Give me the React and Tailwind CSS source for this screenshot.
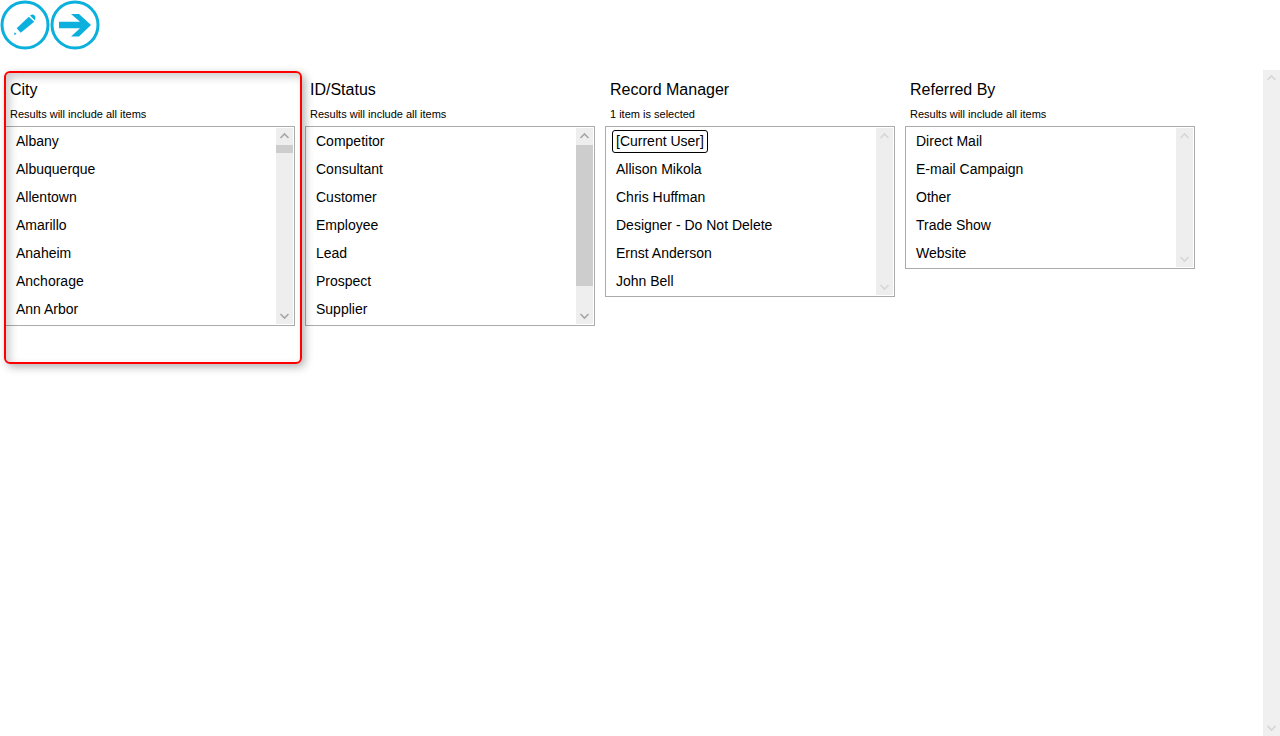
const lists = [
    {
        title: 'City',
        note: 'Results will include all items',
        items: ['Albany', 'Albuquerque', 'Allentown', 'Amarillo', 'Anaheim', 'Anchorage', 'Ann Arbor'],
        height: 'h-[200px]',
        thumb: 'h-[8px]',
        active: true,
    },
    {
        title: 'ID/Status',
        note: 'Results will include all items',
        items: ['Competitor', 'Consultant', 'Customer', 'Employee', 'Lead', 'Prospect', 'Supplier'],
        height: 'h-[200px]',
        thumb: 'h-[141px]',
        active: true,
    },
    {
        title: 'Record Manager',
        note: '1 item is selected',
        items: ['[Current User]', 'Allison Mikola', 'Chris Huffman', 'Designer - Do Not Delete', 'Ernst Anderson', 'John Bell'],
        height: 'h-[171px]',
        focused: true,
    },
    {
        title: 'Referred By',
        note: 'Results will include all items',
        items: ['Direct Mail', 'E-mail Campaign', 'Other', 'Trade Show', 'Website'],
        height: 'h-[143px]',
    },
];

function Chevron({ up, active }) {
    return (
        <svg width="17" height="17" viewBox="0 0 17 17" fill="none" className="shrink-0">
            <path
                d={up ? 'M4.5 10 L8.5 6 L12.5 10' : 'M4.5 7 L8.5 11 L12.5 7'}
                stroke={active ? '#a6a6a6' : '#d6d6d6'}
                strokeWidth="1.6"
            />
        </svg>
    );
}

function Scrollbar({ active, thumb }) {
    return (
        <div className="flex flex-col justify-between w-[17px] my-px mr-px bg-[#eeeeee]">
            <div className="flex flex-col">
                <Chevron up active={active} />
                {thumb && <div className={`${thumb} bg-[#cdcdcd]`}></div>}
            </div>
            <Chevron active={active} />
        </div>
    );
}

function Picker({ list }) {
    return (
        <div className="w-[290px] shrink-0">
            <div className="h-[28px] pt-[10px] pl-[5px] text-[16px] leading-[20px] text-black">{list.title}</div>
            <div className="h-[28px] pt-[8px] pl-[5px] text-[11px] leading-[16px] text-black">{list.note}</div>
            <div className={`flex ${list.height} border border-[#ababab] bg-white`}>
                <div className="flex-1 min-w-0">
                    {list.items.map((item, i) => (
                        <div key={item} className="flex items-center h-[28px] text-[14px] text-black">
                            {list.focused && i == 0 ?
                                <span className="ml-[6px] px-[3px] h-[23px] leading-[21px] border border-black rounded-[3px]">{item}</span> :
                                <span className="ml-[10px]">{item}</span>}
                        </div>
                    ))}
                </div>
                <Scrollbar active={list.active} thumb={list.thumb} />
            </div>
        </div>
    );
}

export default function App() {
    return (
        <div className="h-[736px] overflow-hidden bg-white font-['Liberation_Sans',Arial,sans-serif]">
            <div className="flex h-[70px]">
                <svg width="50" height="50" viewBox="0 0 50 50" fill="none">
                    <circle cx="25" cy="25" r="23" stroke="#0bb0dd" strokeWidth="3" />
                    <path d="M16.7 28.3 L28.8 16.8 L34.2 21.8 L20.7 32.7 Z" fill="#0bb0dd" />
                    <path d="M30 15.6 L32 14.6 Q33.2 14.2 34.2 15.2 L35 16 Q35.8 17 35.2 18.2 L35 20.4 Z" fill="#0bb0dd" />
                    <path d="M14.8 32.2 L16.6 33.9 L13.8 35 Z" fill="#0bb0dd" />
                </svg>
                <svg width="50" height="50" viewBox="0 0 50 50" fill="none">
                    <circle cx="25" cy="25" r="23" stroke="#0bb0dd" strokeWidth="3" />
                    <path d="M9 21.7 H30 L21 14 H29 L41 25 L29 36.5 H21 L30 28.3 H9 Z" fill="#0bb0dd" />
                </svg>
            </div>
            <div className="flex h-[666px]">
                <div className="flex-1 min-w-0 flex gap-[10px] pl-[5px] items-start relative">
                    {lists.map(list => <Picker key={list.title} list={list} />)}
                    <div className="absolute left-[4px] top-[1px] w-[298px] h-[293px] border-2 border-[#fe0000] rounded-[6px] pointer-events-none shadow-[3px_3px_8px_rgba(0,0,0,0.3),inset_4px_4px_8px_rgba(0,0,0,0.2)]"></div>
                </div>
                <div className="flex flex-col justify-between w-[17px] bg-[#f0f0f0]">
                    <Chevron up />
                    <Chevron />
                </div>
            </div>
        </div>
    );
}
